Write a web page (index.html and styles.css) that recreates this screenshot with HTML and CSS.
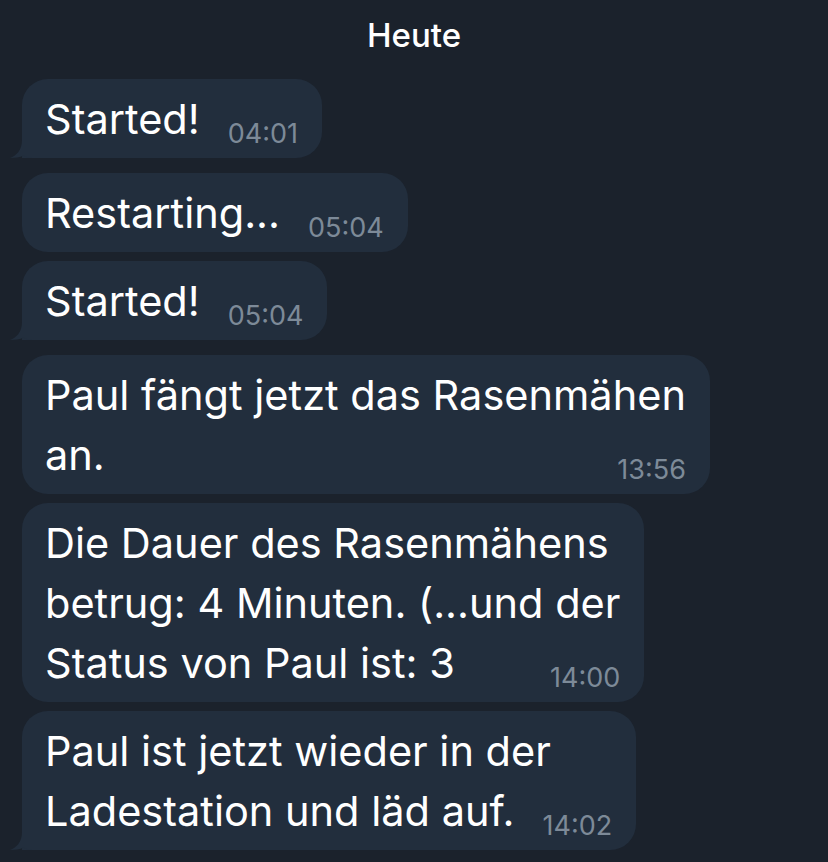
FILE: index.html
```html
<!DOCTYPE html>
<html>
<head>
<meta charset='utf-8'/>
<meta name='viewport' content='width=device-width,initial-scale=1'/>
<link rel="stylesheet" href="styles.css">
</head>
<body>
<div id='chat'>
<div class='day'>Heute</div>

<div class='group'>
<div class='msg tail'>Started!<span class='time'>04:01</span>
<svg class='tip' viewBox='0 0 24 30'><path d='M12 0H24V30H22C18 30 15.5 29.2 13.5 27.6C10 29.4 5 30 0 30C6 27.5 12 23 12 12Z'/></svg>
</div>
</div>

<div class='group'>
<div class='msg'>Restarting...<span class='time'>05:04</span></div>
<div class='msg tail'>Started!<span class='time'>05:04</span>
<svg class='tip' viewBox='0 0 24 30'><path d='M12 0H24V30H22C18 30 15.5 29.2 13.5 27.6C10 29.4 5 30 0 30C6 27.5 12 23 12 12Z'/></svg>
</div>
</div>

<div class='group'>
<div class='msg'>Paul fängt jetzt das Rasenmähen<br>an.<span class='time'>13:56</span></div>
<div class='msg'>Die Dauer des Rasenmähens<br>betrug: 4 Minuten. (...und der<br>Status von Paul ist: 3<span class='time'>14:00</span></div>
<div class='msg tail'>Paul ist jetzt wieder in der<br>Ladestation und läd auf.<span class='time'>14:02</span>
<svg class='tip' viewBox='0 0 24 30'><path d='M12 0H24V30H22C18 30 15.5 29.2 13.5 27.6C10 29.4 5 30 0 30C6 27.5 12 23 12 12Z'/></svg>
</div>
</div>
</div>
</body>
</html>
```

FILE: styles.css
```css
html, body {
    margin: 0;
    background: #1b222c;
}
div#chat {
    display: flex;
    flex-direction: column;
    gap: 15px;
    padding-left: 22px;
    font-family: "Inter", "Noto Sans", sans-serif;
    color: #ffffff;
}
div.day {
    height: 40px;
    padding-top: 15px;
    margin-bottom: 9px;
    margin-left: -22px;
    font-size: 33px;
    line-height: 40px;
    font-weight: 500;
    text-align: center;
}
div.group {
    display: flex;
    flex-direction: column;
    align-items: flex-start;
    gap: 9px;
}
div.msg {
    position: relative;
    display: flow-root;
    padding: 9.5px 24px 9.5px 23px;
    font-size: 41.5px;
    line-height: 60px;
    background: #222e3d;
    border-radius: 26px;
    white-space: nowrap;
}
div.msg.tail {
    border-bottom-left-radius: 0;
}
span.time {
    float: right;
    margin-top: 31px;
    margin-left: 28px;
    font-size: 27px;
    line-height: 28px;
    color: #7d8a98;
}
svg.tip {
    position: absolute;
    left: -12px;
    bottom: 0;
    width: 24px;
    height: 30px;
    fill: #222e3d;
}
```
